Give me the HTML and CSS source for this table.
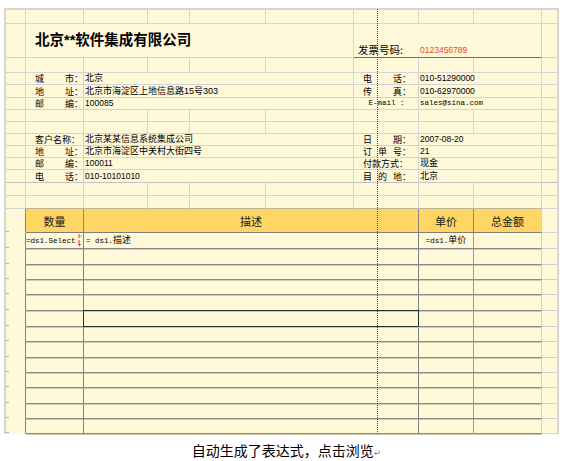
FILE: index.html
```html
<!DOCTYPE html>
<html lang="zh">
<head>
<meta charset="utf-8">
<title>发票模板</title>
<link rel="stylesheet" href="styles.css">
</head>
<body>
<div class="sheet">
  <div class="row h14"><div class="c"></div><div class="c"></div><div class="c"></div><div class="c"></div><div class="c"></div><div class="c"></div><div class="c"></div><div class="c"></div><div class="c"></div><div class="c"></div></div>
  <div class="row h34">
    <div class="c"></div>
    <div class="c s5 title">北京**软件集成有限公司</div>
    <div class="c s3 inv"><span class="inv-l">发票号码:</span><span class="inv-n">0123456789</span></div>
    <div class="c"></div>
  </div>
  <div class="row h15"><div class="c"></div><div class="c"></div><div class="c"></div><div class="c"></div><div class="c"></div><div class="c"></div><div class="c"></div><div class="c"></div><div class="c"></div><div class="c"></div></div>

  <div class="row h12">
    <div class="c"></div>
    <div class="c lab"><span>城</span><span>市：</span></div>
    <div class="c s4 val">北京</div>
    <div class="c rlab"><span>电</span><span>话：</span></div>
    <div class="c s2 val num">010-51290000</div>
    <div class="c"></div>
  </div>
  <div class="row h13">
    <div class="c"></div>
    <div class="c lab"><span>地</span><span>址：</span></div>
    <div class="c s4 val">北京市海淀区上地信息路15号303</div>
    <div class="c rlab"><span>传</span><span>真：</span></div>
    <div class="c s2 val num">010-62970000</div>
    <div class="c"></div>
  </div>
  <div class="row h12">
    <div class="c"></div>
    <div class="c lab"><span>邮</span><span>编：</span></div>
    <div class="c s4 val num">100085</div>
    <div class="c rlab mono center">E-mail :</div>
    <div class="c s2 val mono">sales@sina.com</div>
    <div class="c"></div>
  </div>
  <div class="row h12"><div class="c"></div><div class="c"></div><div class="c"></div><div class="c"></div><div class="c"></div><div class="c"></div><div class="c"></div><div class="c"></div><div class="c"></div><div class="c"></div></div>
  <div class="row h12"><div class="c"></div><div class="c"></div><div class="c"></div><div class="c"></div><div class="c"></div><div class="c"></div><div class="c"></div><div class="c"></div><div class="c"></div><div class="c"></div></div>

  <div class="row h12">
    <div class="c"></div>
    <div class="c lab"><span>客户名称：</span></div>
    <div class="c s4 val">北京某某信息系统集成公司</div>
    <div class="c rlab"><span>日</span><span>期：</span></div>
    <div class="c s2 val num">2007-08-20</div>
    <div class="c"></div>
  </div>
  <div class="row h12">
    <div class="c"></div>
    <div class="c lab"><span>地</span><span>址：</span></div>
    <div class="c s4 val">北京市海淀区中关村大街四号</div>
    <div class="c rlab"><span>订</span><span>单</span><span>号：</span></div>
    <div class="c s2 val num">21</div>
    <div class="c"></div>
  </div>
  <div class="row h12">
    <div class="c"></div>
    <div class="c lab"><span>邮</span><span>编：</span></div>
    <div class="c s4 val num">100011</div>
    <div class="c rlab"><span>付款方式：</span></div>
    <div class="c s2 val">现金</div>
    <div class="c"></div>
  </div>
  <div class="row h13 strong">
    <div class="c"></div>
    <div class="c lab"><span>电</span><span>话：</span></div>
    <div class="c s4 val num">010-10101010</div>
    <div class="c rlab"><span>目</span><span>的</span><span>地：</span></div>
    <div class="c s2 val">北京</div>
    <div class="c"></div>
  </div>
  <div class="row h13"><div class="c"></div><div class="c"></div><div class="c"></div><div class="c"></div><div class="c"></div><div class="c"></div><div class="c"></div><div class="c"></div><div class="c"></div><div class="c"></div></div>
  <div class="row h13 above-head"><div class="c"></div><div class="c"></div><div class="c"></div><div class="c"></div><div class="c"></div><div class="c"></div><div class="c"></div><div class="c"></div><div class="c"></div><div class="c"></div></div>

  <div class="row h24 head">
    <div class="c c1"></div>
    <div class="c hc">数量</div>
    <div class="c s5 hc">描述</div>
    <div class="c hc">单价</div>
    <div class="c hc c9">总金额</div>
    <div class="c"></div>
  </div>

  <div class="row h16 d">
    <div class="c c1"></div>
    <div class="c expr"><span class="mono">=ds1.Select</span><svg class="mark" width="4" height="13" viewBox="0 0 4 13"><path d="M1 0v4M1 6v4" stroke="#e02828" stroke-width="1"/><path d="M3 1v2" stroke="#3cc8d8" stroke-width="1"/><path d="M0 10h3l-1.5 2.5z" fill="#e02828"/></svg></div>
    <div class="c s5 expr"><span class="mono">= ds1.</span>描述</div>
    <div class="c expr center"><span class="mono">=ds1.</span>单价</div>
    <div class="c c9"></div>
    <div class="c"></div>
  </div>
  <div class="row h16 d"><div class="c c1"></div><div class="c"></div><div class="c s5"></div><div class="c"></div><div class="c c9"></div><div class="c"></div></div>
  <div class="row h15 d"><div class="c c1"></div><div class="c"></div><div class="c s5"></div><div class="c"></div><div class="c c9"></div><div class="c"></div></div>
  <div class="row h15 d"><div class="c c1"></div><div class="c"></div><div class="c s5"></div><div class="c"></div><div class="c c9"></div><div class="c"></div></div>
  <div class="row h16 d"><div class="c c1"></div><div class="c"></div><div class="c s5"></div><div class="c"></div><div class="c c9"></div><div class="c"></div></div>
  <div class="row h16 d"><div class="c c1"></div><div class="c"></div><div class="c s5 sel"></div><div class="c"></div><div class="c c9"></div><div class="c"></div></div>
  <div class="row h15 d"><div class="c c1"></div><div class="c"></div><div class="c s5"></div><div class="c"></div><div class="c c9"></div><div class="c"></div></div>
  <div class="row h16 d"><div class="c c1"></div><div class="c"></div><div class="c s5"></div><div class="c"></div><div class="c c9"></div><div class="c"></div></div>
  <div class="row h15 d"><div class="c c1"></div><div class="c"></div><div class="c s5"></div><div class="c"></div><div class="c c9"></div><div class="c"></div></div>
  <div class="row h15 d"><div class="c c1"></div><div class="c"></div><div class="c s5"></div><div class="c"></div><div class="c c9"></div><div class="c"></div></div>
  <div class="row h16 d"><div class="c c1"></div><div class="c"></div><div class="c s5"></div><div class="c"></div><div class="c c9"></div><div class="c"></div></div>
  <div class="row h15 d"><div class="c c1"></div><div class="c"></div><div class="c s5"></div><div class="c"></div><div class="c c9"></div><div class="c"></div></div>
  <div class="row h15 d"><div class="c c1"></div><div class="c"></div><div class="c s5"></div><div class="c"></div><div class="c c9"></div><div class="c"></div></div>

  <div class="pagebreak"></div>
</div>
<p class="cap">自动生成了表达式，点击浏览<span class="ret">↵</span></p>
</body>
</html>
```
FILE: styles.css
```css
* { box-sizing: border-box; }

body {
  margin: 0;
  background: #ffffff;
  color: #000;
  font-family: "Liberation Sans", "Noto Sans CJK SC", sans-serif;
}

.sheet {
  position: relative;
  width: 555px;
  margin: 8px 0 0 4px;
  border: 2px solid #d6d6d6;
  border-bottom: 0;
  background: #fff8d9;
}

.row {
  display: grid;
  grid-template-columns: 20px 58px 64px 42px 76px 88px 65px 55px 68px 15px;
}

.h12 { height: 12px; }
.h13 { height: 13px; }
.h14 { height: 14px; }
.h15 { height: 15px; }
.h16 { height: 16px; }
.h24 { height: 24px; }
.h34 { height: 34px; }

.c {
  min-width: 0;
  display: flex;
  align-items: flex-end;
  white-space: nowrap;
  overflow: hidden;
  border-right: 1px solid #d3d3d3;
  border-bottom: 1px solid #d3d3d3;
  font-size: 9px;
  line-height: 11px;
}
.c:last-child { border-right: 0; }

.s2 { grid-column: span 2; }
.s3 { grid-column: span 3; }
.s4 { grid-column: span 4; }
.s5 { grid-column: span 5; }

.title {
  align-items: center;
  padding: 0 0 1px 9px;
  font-size: 14.5px;
  line-height: 18px;
  font-weight: bold;
}

.inv {
  border-bottom-color: #6e6e6e;
  padding-bottom: 1px;
}
.inv-l {
  width: 66px;
  padding-left: 4px;
  font-size: 10.5px;
  line-height: 13px;
  font-family: "Noto Sans CJK SC", sans-serif;
}
.inv-n {
  color: #f2451f;
  font-size: 8.5px;
  line-height: 11px;
}

.lab {
  justify-content: space-between;
  padding-left: 9px;
  font-family: "Noto Sans CJK SC", sans-serif;
}
.rlab {
  justify-content: space-between;
  padding: 0 7px 0 9px;
  font-family: "Noto Sans CJK SC", sans-serif;
}
.val { padding-left: 1px; }
.num { font-size: 8.5px; }

.mono {
  font-family: "Liberation Mono", monospace;
  font-size: 7.5px;
}
.center { justify-content: center; }
.rlab.center { padding: 0 0 0 1px; }

.strong .c { border-bottom-color: #c2c2c2; }

.above-head .c { border-bottom-color: #bdb59a; }
.above-head .c:first-child,
.above-head .c:last-child { border-bottom-color: #d3d3d3; }

.head .c {
  border-right-color: #858585;
  border-bottom-color: #7c7c7c;
}
.head .hc {
  background: #ffd564;
  align-items: center;
  justify-content: center;
  font-family: "Noto Sans CJK SC", sans-serif;
  font-size: 11px;
  line-height: 14px;
  color: #1a1a1a;
}
.head .c:last-child { border-bottom-color: #d3d3d3; }

.d .c {
  border-right-color: #7f7f7f;
  border-bottom-color: #8a8a8a;
  box-shadow: 0 1px 0 #cfc9ad;
}
.d .c:last-child {
  border-bottom-color: #d0d0d0;
  box-shadow: none;
}
.head .c9, .d .c9 { border-right-color: #d0d0d0; }
.d .c:nth-child(4) { border-right-color: #9a9a9a; }

.c1 {
  border-bottom-color: transparent !important;
  box-shadow: none !important;
  background: linear-gradient(#b0b0b0, #b0b0b0) left bottom / 3px 1px no-repeat;
}

.expr {
  align-items: center;
  padding-left: 2px;
  font-family: "Liberation Mono", "Noto Sans CJK SC", monospace;
  font-size: 9px;
  line-height: 12px;
}
.d .c:nth-child(2).expr { padding-left: 0; }
.d .expr.center { padding-left: 0; }
.mark { margin-left: 2px; flex: none; }

.sel { position: relative; overflow: visible; }
.sel::after {
  content: "";
  position: absolute;
  left: -1px;
  top: -1px;
  right: -1px;
  bottom: -1px;
  border: 1px solid #1e3226;
}

.pagebreak {
  position: absolute;
  left: 371px;
  top: -1px;
  bottom: 0;
  border-left: 1px dotted #4a4a4a;
}

.cap {
  margin: 8px 0 0;
  padding-left: 6px;
  text-align: center;
  font-family: "Noto Sans CJK SC", sans-serif;
  font-size: 14px;
  line-height: 17px;
}
.ret {
  color: #8a8a8a;
  font-family: "DejaVu Sans", sans-serif;
  font-size: 9px;
}
```
